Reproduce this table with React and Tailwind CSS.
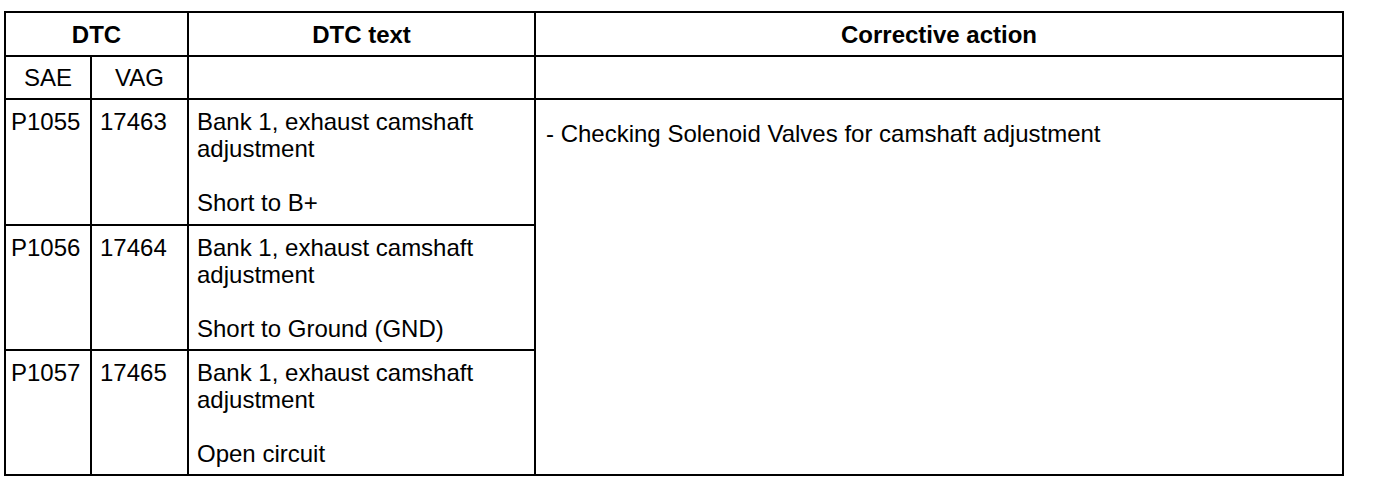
import React from 'react'

const rows = [
  { sae: 'P1055', vag: '17463', text: 'Bank 1, exhaust camshaft adjustment', fault: 'Short to B+' },
  { sae: 'P1056', vag: '17464', text: 'Bank 1, exhaust camshaft adjustment', fault: 'Short to Ground (GND)' },
  { sae: 'P1057', vag: '17465', text: 'Bank 1, exhaust camshaft adjustment', fault: 'Open circuit' },
]

const cell = 'border-r-2 border-b-2 border-black'

export default function App() {
  return (
    <div className="min-h-[482px] w-[1376px] bg-white pt-[11px] pl-[4px] text-black" style={{ fontFamily: '"Liberation Sans", Arial, sans-serif' }}>
      <div className="grid w-[1340px] grid-cols-[86px_97px_347px_808px] grid-rows-[44px_43px_126px_125px_125px] border-l-2 border-t-2 border-black text-[24px] leading-[27px]">
        {/* header */}
        <div className={`${cell} col-span-2 flex items-center justify-center font-bold`}>DTC</div>
        <div className={`${cell} flex items-center justify-center font-bold`}>DTC text</div>
        <div className={`${cell} flex items-center justify-center font-bold`}>Corrective action</div>

        {/* sub header */}
        <div className={`${cell} flex items-center justify-center`}>SAE</div>
        <div className={`${cell} flex items-center justify-center`}>VAG</div>
        <div className={cell} />
        <div className={cell} />

        {rows.map((r, i) => (
          <React.Fragment key={r.sae}>
            <div className={`${cell} col-start-1 pl-[5px] pt-[8px]`}>{r.sae}</div>
            <div className={`${cell} col-start-2 pl-[8px] pt-[8px]`}>{r.vag}</div>
            <div className={`${cell} col-start-3 pl-[8px] pt-[8px]`}>
              <p>{r.text}</p>
              <p className="mt-[27px]">{r.fault}</p>
            </div>
            {i === 0 && (
              <div className={`${cell} col-start-4 row-span-3 pl-[10px] pt-[20px]`}>
                - Checking Solenoid Valves for camshaft adjustment
              </div>
            )}
          </React.Fragment>
        ))}
      </div>
    </div>
  )
}
